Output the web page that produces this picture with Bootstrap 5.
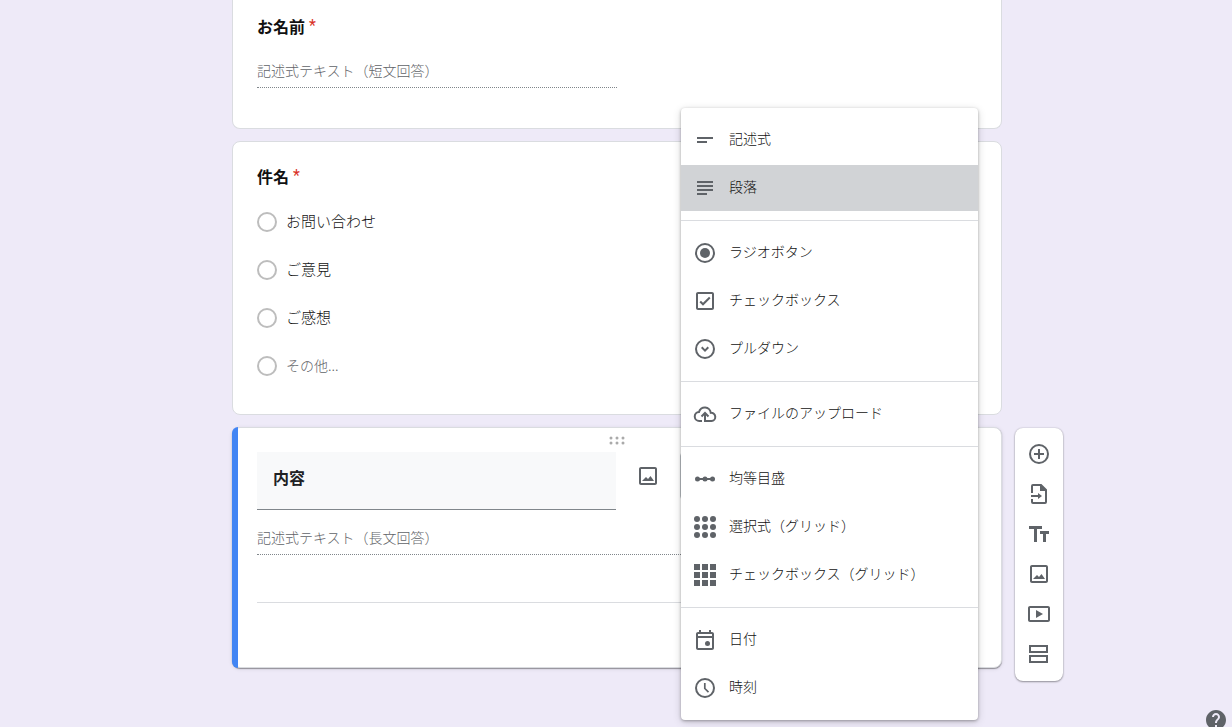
<!DOCTYPE html>
<html lang="ja">
<head>
<meta charset="utf-8">
<meta name="viewport" content="width=device-width, initial-scale=1">
<title>フォームの編集</title>
<link rel="stylesheet" href="https://cdn.jsdelivr.net/npm/bootstrap@5.3.0/dist/css/bootstrap.min.css">
<style>
  body { min-height: 100vh; background: #eeeaf8; color: #111; font: 300 14px/24px "Noto Sans CJK JP", sans-serif; }
  svg { display: block; fill: #5f6368; }
  .form-grid { display: grid; grid-template-columns: 1fr minmax(0, 770px) 1fr; align-content: start; row-gap: 12px; min-height: 100vh; padding-left: 2px; }
  .question { grid-column: 2; background: #fff; border: 1px solid #dadce0; border-radius: 8px; padding: 22px 24px 24px; }
  .question-first { border-top: 0; border-radius: 0 0 8px 8px; padding: 14px 24px 40px; }
  .question-active { position: relative; padding: 24px 24px 64px; box-shadow: 0 1px 1px rgba(0,0,0,.35), 0 1px 4px rgba(0,0,0,.1); }
  .active-bar { position: absolute; left: -1px; top: -1px; bottom: -1px; width: 6px; background: #4285f4; border-radius: 8px 0 0 8px; }
  .q-title { font-size: 16px; font-weight: 700; line-height: 24px; }
  .q-options { margin-top: 10px; }
  .star { color: #d93025; font-family: Roboto, sans-serif; font-weight: 400; line-height: 1; vertical-align: 2px; margin-left: 4px; }
  .answer { display: block; border: 0; border-bottom: 1px dotted #80868b; background: none; color: #5f6368; font-weight: 300; height: 32px; padding: 0 0 4px; line-height: 24px; }
  .answer-short { width: 50%; margin-top: 18px; }
  .answer-long { width: 100%; margin-top: 13px; }
  .answer::placeholder { color: #5f6368; opacity: 1; }
  .option { height: 48px; gap: 9px; font-size: 15px; }
  .option input { appearance: none; width: 20px; height: 20px; border: 2px solid #bdbdbd; border-radius: 50%; margin: 0; background: #fff; }
  .option span { padding-bottom: 2px; }
  .option-other { font-size: 14px; color: #5f6368; }
  .title-input { width: calc(50% - 1px); height: 58px; border: 0; border-bottom: 1px solid #80868b; background: #f8f9fa; padding: 0 16px 8px; font-size: 16px; font-weight: 700; color: #202124; }
  .drag { position: absolute; left: 0; right: 0; top: 8px; border: 0; background: none; padding: 0; }
  .drag svg { margin: auto; fill: #aaa; }
  .tool { border: 0; background: none; padding: 0; width: 48px; height: 40px; display: grid; place-items: center; }
  .type-picker { position: relative; width: 298px; margin: 0 -1px 0 auto; }
  .type-button { width: 100%; height: 48px; background: #fff; border: 1px solid #bdc1c6; border-radius: 4px; }
  .type-menu { position: absolute; z-index: 5; left: 1px; right: 0; top: -344px; background: #fff; border-radius: 4px; padding: 8px 0; box-shadow: 0 1px 3px rgba(0,0,0,.3), 0 2px 8px rgba(0,0,0,.16); }
  .type-item { display: flex; align-items: center; gap: 12px; width: 100%; height: 48px; padding: 0 12px; border: solid transparent; border-width: 1px 0; background: none; background-clip: padding-box; color: #111; font-weight: 300; text-align: left; }
  .type-item span { padding-bottom: 4px; }
  .type-item.selected { background-color: #d1d3d6; }
  .type-menu hr { margin: 8px 0; border-top: 1px solid #dadce0; opacity: 1; }
  .rule { margin: 47px 0 0; border-top: 1px solid #dadce0; opacity: 1; }
  .side-tools { grid-column: 3; align-self: start; justify-self: start; margin: 1px 0 -40px 13px; padding: 6px 0 7px; background: #fff; border-radius: 8px; box-shadow: 0 1px 2px rgba(0,0,0,.35), 0 0 2px rgba(0,0,0,.2); }
  .help { position: fixed; right: 4px; bottom: -5px; border: 0; background: none; padding: 0; }
</style>
</head>
<body>
<main class="form-grid">
  <section class="question question-first">
    <label class="q-title d-block" for="name">お名前<span class="star">*</span></label>
    <input class="answer answer-short" id="name" placeholder="記述式テキスト（短文回答）" disabled>
  </section>

  <section class="question">
    <div class="q-title">件名<span class="star">*</span></div>
    <div class="q-options">
      <label class="option d-flex align-items-center"><input type="radio" name="subject"><span>お問い合わせ</span></label>
      <label class="option d-flex align-items-center"><input type="radio" name="subject"><span>ご意見</span></label>
      <label class="option d-flex align-items-center"><input type="radio" name="subject"><span>ご感想</span></label>
      <label class="option option-other d-flex align-items-center"><input type="radio" name="subject"><span>その他...</span></label>
    </div>
  </section>

  <section class="question question-active">
    <div class="active-bar"></div>
    <button class="drag" aria-label="並べ替え"><svg width="16" height="9"><circle cx="2" cy="2" r="1.5"/><circle cx="8" cy="2" r="1.5"/><circle cx="14" cy="2" r="1.5"/><circle cx="2" cy="7" r="1.5"/><circle cx="8" cy="7" r="1.5"/><circle cx="14" cy="7" r="1.5"/></svg></button>
    <div class="d-flex align-items-start">
      <input class="title-input" value="内容" aria-label="質問">
      <button class="tool ms-2 mt-1" aria-label="画像を追加"><svg width="24" height="24"><path d="M19 5v14H5V5h14m0-2H5c-1.100 0-2 .9-2 2v14c0 1.100.9 2 2 2h14c1.100 0 2-.9 2-2V5c0-1.100-.9-2-2-2zM6 17h12l-3.500-5-2.500 3-2-2z"/></svg></button>
      <div class="type-picker">
        <button class="type-button" aria-label="質問の形式" aria-expanded="true"></button>
        <div class="type-menu" role="listbox" aria-label="質問の形式">
          <button class="type-item" role="option"><svg width="24" height="24"><path d="M4 9h16v2H4zM4 13h10v2H4z"/></svg><span>記述式</span></button>
          <button class="type-item selected" role="option" aria-selected="true"><svg width="24" height="24"><path d="M4 5h16v2H4zM4 9h16v2H4zM4 13h16v2H4zM4 17h10v2H4z"/></svg><span>段落</span></button>
          <hr>
          <button class="type-item" role="option"><svg width="24" height="24"><circle cx="12" cy="12" r="9" fill="none" stroke="#5f6368" stroke-width="2"/><circle cx="12" cy="12" r="5"/></svg><span>ラジオボタン</span></button>
          <button class="type-item" role="option"><svg width="24" height="24"><path d="M19 3H5c-1.100 0-2 .9-2 2v14c0 1.100.9 2 2 2h14c1.100 0 2-.9 2-2V5c0-1.100-.9-2-2-2zm0 16H5V5h14v14zM17.500 9.200l-1.410-1.420-6.090 6.090-2.080-2.070-1.420 1.410 3.500 3.490z"/></svg><span>チェックボックス</span></button>
          <button class="type-item" role="option"><svg width="24" height="24"><circle cx="12" cy="12" r="9" fill="none" stroke="#5f6368" stroke-width="2"/><path d="M12 15l-4-4 1.400-1.400L12 12.200l2.600-2.600L16 11z"/></svg><span>プルダウン</span></button>
          <hr>
          <button class="type-item" role="option"><svg width="24" height="24"><path d="M9 19H6.500A4.500 4.500 0 0 1 6 10a6 6 0 0 1 11.800 0.800A4 4 0 0 1 18.500 19H12V11M8.500 14.500L12 11l3.500 3.500" fill="none" stroke="#5f6368" stroke-width="2"/></svg><span>ファイルのアップロード</span></button>
          <hr>
          <button class="type-item" role="option"><svg width="24" height="24"><path d="M4 11h16v2H4z"/><circle cx="4.500" cy="12" r="2.500"/><circle cx="12" cy="12" r="2.500"/><circle cx="19.500" cy="12" r="2.500"/></svg><span>均等目盛</span></button>
          <button class="type-item" role="option"><svg width="24" height="24"><circle cx="4" cy="4" r="3"/><circle cx="12" cy="4" r="3"/><circle cx="20" cy="4" r="3"/><circle cx="4" cy="12" r="3"/><circle cx="12" cy="12" r="3"/><circle cx="20" cy="12" r="3"/><circle cx="4" cy="20" r="3"/><circle cx="12" cy="20" r="3"/><circle cx="20" cy="20" r="3"/></svg><span>選択式（グリッド）</span></button>
          <button class="type-item" role="option"><svg width="24" height="24"><path d="M1 1h6v6H1zM9 1h6v6H9zM17 1h6v6h-6zM1 9h6v6H1zM9 9h6v6H9zM17 9h6v6h-6zM1 17h6v6H1zM9 17h6v6H9zM17 17h6v6h-6z"/></svg><span>チェックボックス（グリッド）</span></button>
          <hr>
          <button class="type-item" role="option"><svg width="24" height="24"><path d="M19 4h-1V2h-2v2H8V2H6v2H5c-1.100 0-2 .9-2 2v14c0 1.100.9 2 2 2h14c1.100 0 2-.9 2-2V6c0-1.100-.9-2-2-2zm0 16H5V10h14v10zm0-12H5V6h14v2z"/><circle cx="14.500" cy="15.500" r="2.500"/></svg><span>日付</span></button>
          <button class="type-item" role="option"><svg width="24" height="24"><circle cx="12" cy="12" r="9" fill="none" stroke="#5f6368" stroke-width="2"/><path d="M11.800 7v5.500l3.700 3.700" fill="none" stroke="#5f6368" stroke-width="1.700"/></svg><span>時刻</span></button>
        </div>
      </div>
    </div>
    <input class="answer answer-long" placeholder="記述式テキスト（長文回答）" aria-label="長文回答" disabled>
    <hr class="rule">
  </section>

  <nav class="side-tools" aria-label="追加">
    <button class="tool" aria-label="質問を追加"><svg width="24" height="24"><circle cx="12" cy="12" r="9" fill="none" stroke="#5f6368" stroke-width="2"/><path d="M11 7h2v4h4v2h-4v4h-2v-4H7v-2h4z"/></svg></button>
    <button class="tool" aria-label="質問をインポート"><svg width="24" height="24"><path d="M5 11V4a1 1 0 0 1 1-1h8l5 5v12a1 1 0 0 1-1 1H6a1 1 0 0 1-1-1v-3" fill="none" stroke="#5f6368" stroke-width="2"/><path d="M13 3h1l5 5v1h-6zM4 13h7v-2l4 3-4 3v-2H4z"/></svg></button>
    <button class="tool" aria-label="タイトルと説明を追加"><svg width="24" height="24"><path d="M2 4v3h5v13h3V7h5V4zM22 9h-9v3h3v8h3v-8h3z"/></svg></button>
    <button class="tool" aria-label="画像を追加"><svg width="24" height="24"><path d="M19 5v14H5V5h14m0-2H5c-1.100 0-2 .9-2 2v14c0 1.100.9 2 2 2h14c1.100 0 2-.9 2-2V5c0-1.100-.9-2-2-2zM6 17h12l-3.500-5-2.500 3-2-2z"/></svg></button>
    <button class="tool" aria-label="動画を追加"><svg width="24" height="24"><path d="M21 4H3c-1.100 0-2 .9-2 2v12c0 1.100.9 2 2 2h18c1.100 0 2-.9 2-2V6c0-1.100-.9-2-2-2zm0 14H3V6h18zM9 8v8l7-4z"/></svg></button>
    <button class="tool" aria-label="セクションを追加"><svg width="24" height="24"><path d="M3 4h17v6H3zM3 14h17v6H3z" fill="none" stroke="#5f6368" stroke-width="2"/></svg></button>
  </nav>
</main>
<button class="help" aria-label="ヘルプ"><svg width="24" height="24"><path d="M12 2C6.480 2 2 6.480 2 12s4.480 10 10 10 10-4.480 10-10S17.520 2 12 2zm1 17h-2v-2h2v2zm2.070-7.750l-.9.920C13.450 12.900 13 13.500 13 15h-2v-.5c0-1.100.450-2.100 1.170-2.830l1.240-1.260c.370-.360.590-.860.590-1.410 0-1.100-.9-2-2-2s-2 .9-2 2H8c0-2.210 1.790-4 4-4s4 1.790 4 4c0 .880-.360 1.680-.930 2.250z"/></svg></button>
<script src="https://cdn.jsdelivr.net/npm/bootstrap@5.3.0/dist/js/bootstrap.bundle.min.js"></script>
</body>
</html>
